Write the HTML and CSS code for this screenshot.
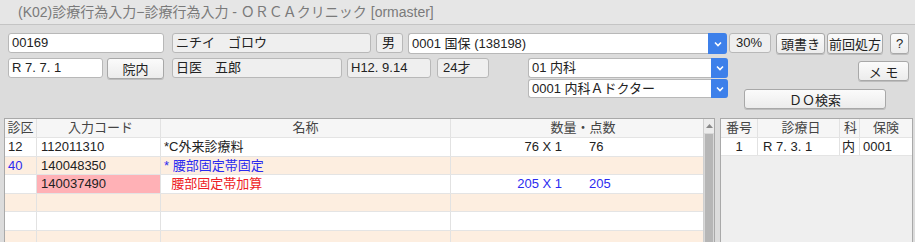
FILE: index.html
```html
<!DOCTYPE html>
<html lang="ja">

<head>
    <meta charset="UTF-8">
    <title>診療行為入力</title>
    <link rel="stylesheet" href="styles.css">
</head>

<body>
    <div class="titlebar">(K02)診療行為入力−診療行為入力 - ＯＲＣＡクリニック [ormaster]</div>

    <div class="head">
        <!-- 1段目 -->
        <div class="row row1">
            <div class="field w-id">00169</div>
            <div class="field ro w-kana">ニチイ　ゴロウ</div>
            <div class="field ro w-sex">男</div>
            <div class="select w-ins">
                <span>0001 国保 (138198)</span>
                <span class="arrow"><svg width="8" height="6" viewBox="0 0 8 6"><path d="M1 1.5 L4 4.5 L7 1.5" fill="none" stroke="#fff" stroke-width="1.6"/></svg></span>
            </div>
            <div class="field ro w-rate">30%</div>
            <button class="btn w-atama">頭書き</button>
            <button class="btn w-zenkai">前回処方</button>
            <button class="btn w-help">?</button>
        </div>

        <!-- 2段目 -->
        <div class="row row2">
            <div class="left2">
                <div class="field w-date">R 7. 7. 1</div>
                <button class="btn w-innai">院内</button>
                <div class="field ro w-doc">日医　五郎</div>
                <div class="field ro w-birth">H12. 9.14</div>
                <div class="field ro w-age">24才</div>
            </div>
            <div class="selects">
                <div class="select w-ka">
                    <span>01 内科</span>
                    <span class="arrow"><svg width="8" height="6" viewBox="0 0 8 6"><path d="M1 1.5 L4 4.5 L7 1.5" fill="none" stroke="#fff" stroke-width="1.6"/></svg></span>
                </div>
                <div class="select w-ka">
                    <span>0001 内科Ａドクター</span>
                    <span class="arrow"><svg width="8" height="6" viewBox="0 0 8 6"><path d="M1 1.5 L4 4.5 L7 1.5" fill="none" stroke="#fff" stroke-width="1.6"/></svg></span>
                </div>
            </div>
            <div class="right2">
                <button class="btn w-memo">メ モ</button>
                <button class="btn w-do">ＤＯ検索</button>
            </div>
        </div>
    </div>

    <div class="tables">
        <div class="panel main">
            <div class="grid">
                <div class="trow thead">
                    <div class="c c-ku center">診区</div>
                    <div class="c c-code center">入力コード</div>
                    <div class="c c-name center">名称</div>
                    <div class="c c-qty center">数量・点数</div>
                </div>
                <div class="trow">
                    <div class="c c-ku">12</div>
                    <div class="c c-code">112011310</div>
                    <div class="c c-name">*C外来診療料</div>
                    <div class="c c-qty"><span class="q">76 X 1</span><span class="p">76</span></div>
                </div>
                <div class="trow alt">
                    <div class="c c-ku blue">40</div>
                    <div class="c c-code">140048350</div>
                    <div class="c c-name blue">* 腰部固定帯固定</div>
                    <div class="c c-qty"></div>
                </div>
                <div class="trow">
                    <div class="c c-ku"></div>
                    <div class="c c-code pink">140037490</div>
                    <div class="c c-name red">&nbsp;&nbsp;腰部固定帯加算</div>
                    <div class="c c-qty blue"><span class="q">205 X 1</span><span class="p">205</span></div>
                </div>
                <div class="trow alt">
                    <div class="c c-ku"></div><div class="c c-code"></div><div class="c c-name"></div><div class="c c-qty"></div>
                </div>
                <div class="trow">
                    <div class="c c-ku"></div><div class="c c-code"></div><div class="c c-name"></div><div class="c c-qty"></div>
                </div>
                <div class="trow alt">
                    <div class="c c-ku"></div><div class="c c-code"></div><div class="c c-name"></div><div class="c c-qty"></div>
                </div>
            </div>
            <div class="scrollbar">
                <div class="sb-up"><svg width="7" height="4" viewBox="0 0 7 4"><path d="M0 4 L3.5 0 L7 4 Z" fill="#888"/></svg></div>
                <div class="sb-thumb"></div>
            </div>
        </div>

        <div class="panel side">
            <div class="trow thead">
                <div class="c s-no center">番号</div>
                <div class="c s-date center">診療日</div>
                <div class="c s-ka center">科</div>
                <div class="c s-ins center">保険</div>
            </div>
            <div class="trow">
                <div class="c s-no center">1</div>
                <div class="c s-date">R 7. 3. 1</div>
                <div class="c s-ka">内</div>
                <div class="c s-ins">0001</div>
            </div>
        </div>
    </div>
</body>

</html>
```

FILE: styles.css
```css
* {
    box-sizing: border-box;
    margin: 0;
    padding: 0;
}

body {
    font-family: "Liberation Sans", "Noto Sans CJK JP", sans-serif;
    font-size: 13px;
    color: #222;
    background-color: #dcdcdc;
    width: 915px;
    height: 242px;
    overflow: hidden;
}

/* Window title */
.titlebar {
    height: 25px;
    line-height: 24px;
    padding-left: 18px;
    font-size: 14px;
    color: #7a7a7a;
    background-color: #e6e6e6;
    border-bottom: 1px solid #c4c4c4;
}

.head {
    padding: 8px 0 0 8px;
    height: 93px;
}

.row {
    display: flex;
    align-items: flex-start;
}

.row1 {
    height: 25px;
}

/* Input fields */
.field {
    height: 20px;
    line-height: 18px;
    padding-left: 3px;
    background-color: #fff;
    border: 1px solid #b8b8b8;
    border-radius: 3px;
    white-space: nowrap;
    overflow: hidden;
}

.field.ro {
    background-color: #efefef;
}

.select {
    display: flex;
    height: 21px;
    line-height: 19px;
    background-color: #fff;
    border: 1px solid #b8b8b8;
    border-right: none;
    border-radius: 3px;
}

.select span:first-child {
    flex: 1;
    padding-left: 3px;
    white-space: nowrap;
}

.select .arrow {
    width: 19px;
    margin: -1px 0;
    background-color: #3d80ea;
    border-radius: 0 3px 3px 0;
    display: flex;
    align-items: center;
    justify-content: center;
}

.btn {
    height: 21px;
    font-family: inherit;
    font-size: 13px;
    color: #222;
    background: linear-gradient(#fbfbfb, #ececec);
    border: 1px solid #a8a8a8;
    border-radius: 3px;
    box-shadow: 0 1px 0 #bdbdbd;
    cursor: pointer;
}

.w-id { width: 156px; margin-right: 8px; }
.w-kana { width: 199px; margin-right: 5px; }
.w-sex { width: 27px; margin-right: 5px; padding-left: 5px; }
.w-ins { width: 319px; margin-right: 2px; }
.w-rate { width: 42px; margin-right: 5px; padding-left: 6px; }
.w-atama { width: 49px; margin-right: 2px; }
.w-zenkai { width: 56px; margin-right: 7px; }
.w-help { width: 19px; }

.row2 {
    align-items: flex-start;
}

.left2 {
    display: flex;
    width: 520px;
}

.w-date { width: 95px; margin-right: 4px; }
.w-innai { width: 57px; margin-right: 8px; }
.w-doc { width: 170px; margin-right: 5px; }
.w-birth { width: 84px; margin-right: 6px; }
.w-age { width: 52px; padding-left: 5px; }

.selects {
    display: flex;
    flex-direction: column;
}

.w-ka {
    width: 200px;
    height: 20px;
    line-height: 18px;
}

.w-ka .arrow {
    width: 17px;
}

.w-ka + .w-ka {
    margin-top: 1px;
    height: 19px;
    line-height: 17px;
}

.right2 {
    display: flex;
    flex-direction: column;
    align-items: flex-end;
    width: 181px;
    padding-top: 3px;
}

.w-memo { width: 51px; height: 20px; }

.w-do {
    width: 142px;
    margin-top: 8px;
    margin-right: 23px;
    height: 20px;
}

/* Tables */
.tables {
    display: flex;
    padding-left: 4px;
}

.panel {
    height: 130px;
    border: 1px solid #a9a9a9;
    border-bottom: none;
    overflow: hidden;
}

.main {
    display: flex;
    width: 711px;
    background-color: #fdeee0;
}

.side {
    width: 193px;
    margin-left: 5px;
    background-color: #efefef;
}

.grid {
    width: 698px;
}

.trow {
    display: flex;
    height: 18.5px;
    line-height: 17.5px;
    background-color: #fff;
    border-bottom: 1px solid #e4e4e4;
}

.trow.alt {
    background-color: #fdeee0;
}

.trow.thead {
    height: 19px;
    line-height: 18px;
    background-color: #f6f6f6;
    color: #444;
}

.c {
    border-right: 1px solid #e2e2e2;
    padding-left: 3px;
    white-space: nowrap;
    overflow: hidden;
}

.center {
    text-align: center;
    padding-left: 0;
}

.c-ku { width: 32px; }
.c-code { width: 124px; padding-left: 4px; }
.c-name { width: 290px; }
.c-qty { width: 252px; border-right: none; display: flex; }
.thead .c-qty { justify-content: center; padding-left: 12px; }

.q {
    width: 108px;
    text-align: right;
}

.p {
    padding-left: 27px;
}

.blue { color: #2b2bf0; }
.red { color: #ee1c24; }
.pink { background-color: #ffb1b6; }

/* Scrollbar */
.scrollbar {
    width: 11px;
    background-color: #d8d8d8;
    border-left: 1px solid #cfcfcf;
}

.sb-up {
    height: 14px;
    background-color: #ececec;
    display: flex;
    align-items: center;
    justify-content: center;
}

.sb-thumb {
    margin: 1px 1px 0;
    height: 120px;
    background-color: #b6b6b6;
}

.s-no { width: 37px; }
.s-date { width: 82px; padding-left: 5px; }
.s-ka { width: 20px; padding-left: 2px; }
.s-ins { width: 52px; border-right: none; }
.side .trow:not(.thead) { height: 18px; }
```
